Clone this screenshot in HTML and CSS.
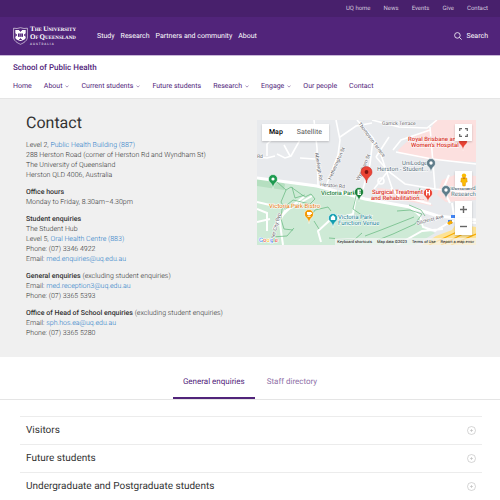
FILE: index.html
```html
<!DOCTYPE html>
<html lang="en">

<head>
    <meta charset="UTF-8">
    <meta name="viewport" content="width=device-width, initial-scale=1.0">
    <title>Contact - School of Public Health</title>
    <link rel="stylesheet" href="styles.css">
</head>

<body>
    <header>
        <nav class="top-nav" aria-label="Global">
            <a href="#">UQ home</a>
            <a href="#">News</a>
            <a href="#">Events</a>
            <a href="#">Give</a>
            <a href="#">Contact</a>
        </nav>
        <div class="main-header">
            <a class="logo" href="#" aria-label="The University of Queensland">
                <svg class="shield" viewBox="0 0 15 18">
                    <path d="M.6 1.2Q4 2 7.5.7 11 2 14.4 1.2V10c0 4-4 6-6.9 7.300C4.600 16 .6 14 .6 10z" fill="none" stroke="#fff" stroke-width=".6"/>
                    <path d="M2.300 3h10.400v7.500c0 1.500-1.500 2.500-5.200 3.500C3.800 13 2.300 12 2.300 10.500z" fill="#fff"/>
                    <path d="M6 3l1.500 1.500L9 3M2.300 6.500 4 8l-1.700 1.500M12.700 6.500 11 8l1.700 1.500M6 13l1.500-1.500L9 13" fill="#51247a" stroke="#51247a" stroke-width=".6"/>
                    <path d="M5 6.500h5v3.300H5z" fill="#51247a"/>
                    <path d="M6.700 6.500v3.300M8.300 6.500v3.300" stroke="#fff" stroke-width=".4"/>
                </svg>
                <span class="logo-text">
                    <span class="logo-line"><b>T</b>HE <b>U</b>NIVERSITY</span>
                    <span class="logo-line"><b>O</b>F <b>Q</b>UEENSLAND</span>
                    <span class="logo-country">AUSTRALIA</span>
                </span>
            </a>
            <nav class="main-nav" aria-label="Main">
                <a href="#">Study</a>
                <a href="#">Research</a>
                <a href="#">Partners and community</a>
                <a href="#">About</a>
            </nav>
            <button class="search" type="button">
                <svg viewBox="0 0 8 8"><circle cx="3.400" cy="3.400" r="2.800"/><path d="M5.500 5.500 7.600 7.600"/></svg>
                Search
            </button>
        </div>
    </header>

    <div class="site-header">
        <a class="site-title" href="#">School of Public Health</a>
        <nav class="site-nav" aria-label="School">
            <a href="#">Home</a>
            <a href="#">About <svg viewBox="0 0 4 3"><path d="M.5.7 2 2.100 3.500.7"/></svg></a>
            <a href="#">Current students <svg viewBox="0 0 4 3"><path d="M.5.7 2 2.100 3.500.7"/></svg></a>
            <a href="#">Future students</a>
            <a href="#">Research <svg viewBox="0 0 4 3"><path d="M.5.7 2 2.100 3.500.7"/></svg></a>
            <a href="#">Engage <svg viewBox="0 0 4 3"><path d="M.5.7 2 2.100 3.500.7"/></svg></a>
            <a href="#">Our people</a>
            <a href="#">Contact</a>
        </nav>
    </div>

    <main>
        <section class="hero">
            <div class="details">
                <h1>Contact</h1>
                <p>Level 2, <a href="#">Public Health Building (887)</a><br>
                    288 Herston Road (corner of Herston Rd and Wyndham St)<br>
                    The University of Queensland<br>
                    Herston QLD 4006, Australia</p>
                <p><strong>Office hours</strong><br>
                    Monday to Friday, 8.30am–4.30pm</p>
                <p><strong>Student enquiries</strong><br>
                    The Student Hub<br>
                    Level 5, <a href="#">Oral Health Centre (883)</a><br>
                    Phone: (07) 3346 4922<br>
                    Email: <a href="#">med.enquiries@uq.edu.au</a></p>
                <p><strong>General enquiries</strong> (excluding student enquiries)<br>
                    Email: <a href="#">med.reception3@uq.edu.au</a><br>
                    Phone: (07) 3365 5393</p>
                <p><strong>Office of Head of School enquiries</strong> (excluding student enquiries)<br>
                    Email: <a href="#">sph.hos.ea@uq.edu.au</a><br>
                    Phone: (07) 3365 5280</p>
            </div>

            <div class="map">
                <svg class="map-canvas" viewBox="0 0 219 125" preserveAspectRatio="xMidYMid slice">
                    <rect width="219" height="125" fill="#e8eaed"/>
                    <!-- hospital grounds -->
                    <path d="M141 30 155 17l20-10 3-7h41v42l-46-2-31-7zM185 60l15-6 19 2v24l-30 2-9-7zM120 68l42 4 14 14-54-10z" fill="#fce0df"/>
                    <!-- park -->
                    <path d="M0 58l63 10 45 11 43 9 12 7 5 13 10 5-20 12H0z" fill="#ceead6"/>
                    <path d="M0 58l22 3 6 3-1 6-14-2-13-2z" fill="#b5dfc0"/>
                    <path d="M165 125l14-9 16-6 4-6 20 3v18z" fill="#fde293"/>
                    <path d="M172 125l30-14M184 125l28-14M194 125l25-11" stroke="#f9ab00" stroke-width="1.200"/>
                    <!-- roads -->
                    <g fill="none" stroke="#fff" stroke-width="1.600">
                        <path d="M0 58l60 8 48 13 45 8 28 9 38 4" stroke-width="3"/>
                        <path d="M57 0l3 28 1 37M79 0l4 20-2 15-12 31M83 17l16-11 16-3M100 0l16 18 7 14 12 36-2 12M116 19l-3 25-7 25M0 37l10 1 8-2M10 36V24l8-7M20 34l8 4 6-2 10-18 9-3M27 25l6 11M43 38l15 1"/>
                        <path d="M115 0l27 7 28 1 10-8M136 30l8-10 29-10M173 7l3 36M139 32l36 7 44 5M119 37l13-20M119 37l12 14 17 13 30 5M131 51l-14 18M176 43l2 26M178 69l41 4"/>
                        <path d="M0 89l10 4v18M0 102l13-3M26 125l-2-14c-2-12 0-15 8-22l23-13M16 109l12-18 20-15M99 76l-3 18-24 7-11 10 3 11M0 82l13 3" stroke-width="2"/>
                        <path d="M153 87l10 9 3 11 12 4 17-10 24 2M140 125l25-14 21-2M134 68l8 8 32 8M195 83l3 18M192 55l-6 14 7 14" stroke-width="2"/>
                        <circle cx="124" cy="61" r="3"/>
                    </g>
                    <!-- walking tracks -->
                    <g fill="none" stroke="#62b67b" stroke-width=".7">
                        <path d="M20 62l9 8 5-3 14 10 6-3 4 5-5 5-17-4-11 9-1 10 3 10 9 1M35 67l3 11 10-3M29 70l-5 12 4 7 14-5M14 117l16-1 7-8M53 98l5-8 13-3 3 4M57 101l5 8M105 113l-8 7-25-2M100 72l-4 17 10 7M152 85l12 5 4 6M121 120l15-6 22-10 7-10-12-4-13 1M108 116l16-6 33-13M163 68l-3 9"/>
                    </g>

                    <g class="road-name">
                        <text x="125" y="5">Garrick Terrace</text>
                        <text x="0" y="38">Rd</text>
                        <text x="63" y="66" transform="rotate(5 63 66)">Herston Rd</text>
                        <text x="58" y="33" transform="rotate(81 58 33)">Aberleigh Rd</text>
                        <text x="74" y="60" transform="rotate(-66 74 60)">Hetherington St</text>
                        <text x="101" y="4" transform="rotate(53 101 4)">Thompson Terrace</text>
                        <text x="102" y="61" transform="rotate(-66 102 61)">Wyndham St</text>
                        <text x="16" y="123" transform="rotate(-75 16 123)">Inner City Byp</text>
                        <text x="160" y="105" transform="rotate(-15 160 105)">Gilchrist Ave</text>
                    </g>

                    <g class="place hospital">
                        <text x="151" y="21">Royal Brisbane and</text>
                        <text x="154" y="27">Women's Hospital</text>
                        <text x="115" y="74">Surgical Treatment</text>
                        <text x="114" y="80">and Rehabilitation...</text>
                    </g>
                    <g class="place building">
                        <text x="145" y="45">UniLodge</text>
                        <text x="120" y="51">Herston - Student...</text>
                        <text x="187" y="70">Queensland</text>
                        <text x="194" y="76">Research</text>
                    </g>
                    <g class="place park"><text x="64" y="75">Victoria Park</text></g>
                    <g class="place bistro"><text x="12" y="88">Victoria Park Bistro</text></g>
                    <g class="place venue">
                        <text x="81" y="99">Victoria Park</text>
                        <text x="81" y="105">Function Venue</text>
                    </g>

                    <defs>
                        <path id="pin" d="M0 6.500C-1-.2-4.500 1-4.500-3a4.500 4.500 0 0 1 9 0C4.500 1 1-.2 0 6.500z"/>
                    </defs>
                    <g stroke="#fff" stroke-width=".6">
                        <use href="#pin" x="16" y="62" fill="#1e9a50"/>
                        <use href="#pin" x="102" y="75" fill="#188038"/>
                        <use href="#pin" x="52" y="97" fill="#f29900"/>
                        <use href="#pin" x="76" y="101" fill="#129eaf"/>
                        <use href="#pin" x="174" y="46" fill="#607d8b"/>
                        <use href="#pin" x="189" y="73" fill="#607d8b"/>
                        <use href="#pin" x="171" y="76" fill="#ea4335"/>
                        <use href="#pin" x="206" y="24" fill="#ea4335"/>
                    </g>
                    <g fill="#fff">
                        <circle cx="16" cy="59" r="1.600"/>
                        <path d="M100.500 69.500h3.500v1.200h-2v.9h1.700v1.200H102v.8h2v1.300h-3.500z"/>
                        <path d="M50 92h4v2.500q-2 2-4 0zM54 92.500h1v1.500h-1zM50.500 96h3v.7h-3z"/>
                        <path d="M73.800 96.500h4.400v3.500h-4.400zM75 95.500h2v1h-2z"/>
                        <circle cx="174" cy="43" r="1.700"/>
                        <circle cx="189" cy="70" r="1.700"/>
                        <path d="M169 70h1.200v2h1.600v-2h1.200v5.500h-1.200v-2.200h-1.600v2.200H169z"/>
                    </g>
                    <path d="M109.500 63C109 56 104 57 104 52a5.500 5.500 0 0 1 11 0c0 5-5 4-5.500 11z" fill="#ea4335" stroke="#c5221f" stroke-width=".5"/>
                    <circle cx="109.500" cy="52" r="1.900" fill="#811411"/>
                    <path d="M194 95h9v3h-9zM191 100h4v4h-4z" fill="#4285f4"/>
                    <path d="M190 103l4-3 2 3-4 2z" fill="#f9ab00"/>

                    <g class="map-logo">
                        <text x="2" y="122"><tspan fill="#4285f4">G</tspan><tspan fill="#ea4335">o</tspan><tspan fill="#fbbc04">o</tspan><tspan fill="#4285f4">g</tspan><tspan fill="#34a853">l</tspan><tspan fill="#ea4335">e</tspan></text>
                    </g>
                </svg>

                <div class="map-type">
                    <button type="button" class="selected">Map</button>
                    <button type="button">Satellite</button>
                </div>
                <div class="map-tools">
                    <button type="button" aria-label="Toggle fullscreen view">
                        <svg viewBox="0 0 9 9"><path d="M.7 3V.7H3M6 .7h2.300V3M8.300 6v2.300H6M3 8.300H.7V6" fill="none" stroke="#666" stroke-width="1.200"/></svg>
                    </button>
                    <button type="button" class="pegman" aria-label="Street View">
                        <svg viewBox="0 0 10 14"><circle cx="5" cy="2.600" r="2.200" fill="#fbbc04"/><path d="M2.300 5h5.400l.5 4-1.500.3L6.200 13H3.800l-.5-3.700L1.800 9z" fill="#fbbc04" stroke="#e28a00" stroke-width=".5"/><path d="M3.200 4.600h3.600L5 6.200z" fill="#c77700"/></svg>
                    </button>
                    <div class="zoom">
                        <button type="button" aria-label="Zoom in"><svg viewBox="0 0 9 9"><path d="M4.500 1v7M1 4.500h7" stroke="#666" stroke-width="1.400"/></svg></button>
                        <button type="button" aria-label="Zoom out"><svg viewBox="0 0 9 9"><path d="M1 4.500h7" stroke="#666" stroke-width="1.400"/></svg></button>
                    </div>
                </div>
                <div class="map-legal">
                    <button type="button">Keyboard shortcuts</button>
                    <span>Map data ©2023</span>
                    <a href="#">Terms of Use</a>
                    <a href="#">Report a map error</a>
                </div>
            </div>
        </section>

        <div class="tabs" role="tablist">
            <button type="button" class="tab active" role="tab" aria-selected="true">General enquiries</button>
            <button type="button" class="tab" role="tab" aria-selected="false">Staff directory</button>
        </div>

        <div class="accordion">
            <button type="button" class="accordion-item">Visitors
                <svg viewBox="0 0 9 9"><circle cx="4.500" cy="4.500" r="4"/><path d="M4.500 3v3M3 4.500h3"/></svg>
            </button>
            <button type="button" class="accordion-item">Future students
                <svg viewBox="0 0 9 9"><circle cx="4.500" cy="4.500" r="4"/><path d="M4.500 3v3M3 4.500h3"/></svg>
            </button>
            <button type="button" class="accordion-item">Undergraduate and Postgraduate students
                <svg viewBox="0 0 9 9"><circle cx="4.500" cy="4.500" r="4"/><path d="M4.500 3v3M3 4.500h3"/></svg>
            </button>
        </div>
    </main>
</body>

</html>
```
FILE: styles.css
```css
* {
    box-sizing: border-box;
}

body {
    margin: 0;
    font-family: Roboto, Arial, sans-serif;
    font-size: 7px;
    line-height: 10px;
    text-rendering: geometricPrecision;
    color: #333;
    background-color: #fff;
}

a {
    color: inherit;
    text-decoration: none;
}

button {
    margin: 0;
    padding: 0;
    border: none;
    background: none;
    font: inherit;
    color: inherit;
    text-rendering: inherit;
    cursor: pointer;
}

svg {
    display: block;
}

/* Header */
.top-nav {
    display: flex;
    justify-content: flex-end;
    align-items: center;
    gap: 13px;
    height: 17px;
    padding: 0 12px;
    background-color: #48206c;
    color: #d5c9df;
    font-size: 6px;
}

.main-header {
    display: flex;
    align-items: center;
    height: 39px;
    padding: 0 12px 0 13px;
    background-color: #51247a;
    border-bottom: 1px solid #c9b8d8;
    color: #fff;
}

.logo {
    display: flex;
    align-items: center;
    gap: 2px;
    margin-right: 21px;
}

.shield {
    width: 15px;
    height: 18px;
}

.logo-text {
    display: flex;
    flex-direction: column;
    font-family: "Liberation Serif", "Times New Roman", serif;
}

.logo-line {
    font-size: 5px;
    font-weight: bold;
    line-height: 7px;
    white-space: nowrap;
}

.logo-line b {
    font-size: 7px;
}

.logo-country {
    font-family: Roboto, Arial, sans-serif;
    font-size: 3px;
    line-height: 4px;
    letter-spacing: 1px;
}

.main-nav {
    display: flex;
    gap: 6px;
    flex: 1;
}

.search {
    display: flex;
    align-items: center;
    gap: 4px;
}

.search svg {
    width: 8px;
    height: 8px;
    fill: none;
    stroke: #fff;
    stroke-width: .8;
}

.site-header {
    padding: 7px 13px;
    border-bottom: 1px solid #e5e5e5;
    color: #51247a;
}

.site-title {
    display: block;
    font-size: 8px;
    font-weight: 500;
    line-height: 10px;
    margin-bottom: 8px;
}

.site-nav {
    display: flex;
    gap: 12px;
}

.site-nav a {
    display: flex;
    align-items: center;
    gap: 3px;
}

.site-nav svg {
    width: 4px;
    height: 3px;
    fill: none;
    stroke: #51247a;
    stroke-width: .5;
}

/* Contact details and map */
.hero {
    display: grid;
    grid-template-columns: 1fr 1fr;
    gap: 12px;
    padding: 14px 24px 12px 26px;
    background-color: #f0f0f0;
}

.details {
    font-weight: 300;
    white-space: nowrap;
}

.details h1 {
    margin: 0 0 7px;
    font-size: 16px;
    font-weight: 400;
    line-height: 20px;
}

.details p {
    margin: 0 0 7px;
}

.details a {
    color: #2a7cc7;
}

.details strong {
    font-weight: 500;
}

.map {
    position: relative;
    align-self: start;
    height: 125px;
    margin-top: 7px;
    overflow: hidden;
}

.map-canvas {
    width: 100%;
    height: 100%;
}

.road-name {
    font-size: 5px;
    fill: #5f6368;
    paint-order: stroke;
    stroke: #fff;
    stroke-width: 1px;
}

.place {
    font-size: 6px;
    paint-order: stroke;
    stroke: #fff;
    stroke-width: 1px;
}

.hospital {
    fill: #d93025;
    font-weight: 500;
}

.building {
    fill: #546e7a;
}

.park {
    fill: #188038;
    font-weight: 500;
}

.bistro {
    fill: #e37400;
}

.venue {
    fill: #12808f;
}

.map-logo {
    font-size: 6px;
    paint-order: stroke;
    stroke: #fff;
    stroke-width: 1px;
}

.map-type {
    position: absolute;
    top: 4px;
    left: 5px;
    display: flex;
    background-color: #fff;
    box-shadow: 0 1px 2px rgba(0, 0, 0, 0.2);
    color: #565656;
    line-height: 17px;
}

.map-type button {
    padding: 0 7px;
}

.map-type .selected {
    color: #000;
    font-weight: 500;
}

.map-tools {
    position: absolute;
    top: 4px;
    right: 4px;
    width: 17px;
}

.map-tools button {
    display: flex;
    align-items: center;
    justify-content: center;
    width: 17px;
    height: 17px;
    background-color: #fff;
    box-shadow: 0 1px 2px rgba(0, 0, 0, 0.2);
}

.map-tools svg {
    width: 9px;
    height: 9px;
}

.map-tools .pegman {
    margin: 30px 0 13px;
}

.map-tools .pegman svg {
    width: 10px;
    height: 14px;
}

.map-legal {
    position: absolute;
    right: 0;
    bottom: 0;
    display: flex;
    gap: 5px;
    padding: 0 2px;
    background-color: rgba(245, 245, 245, 0.7);
    color: #000;
    font-size: 4px;
    line-height: 7px;
    white-space: nowrap;
}

/* Tabs */
.tabs {
    display: flex;
    justify-content: center;
    gap: 2px;
    padding-top: 9px;
    border-bottom: 1px solid #e5e5e5;
}

.tab {
    height: 33px;
    padding: 0 10px;
    border-bottom: 2px solid transparent;
    color: #8f72a8;
    font-size: 8px;
}

.tab.active {
    border-bottom-color: #51247a;
    color: #51247a;
}

/* Accordion */
.accordion {
    padding: 16px 18px 0 20px;
}

.accordion-item {
    display: flex;
    align-items: center;
    justify-content: space-between;
    width: 100%;
    height: 28px;
    padding: 0 6px;
    border-top: 1px solid #ececec;
    font-size: 10px;
    text-align: left;
}

.accordion-item svg {
    width: 9px;
    height: 9px;
    fill: none;
    stroke: #bbb;
    stroke-width: .6;
}
```
